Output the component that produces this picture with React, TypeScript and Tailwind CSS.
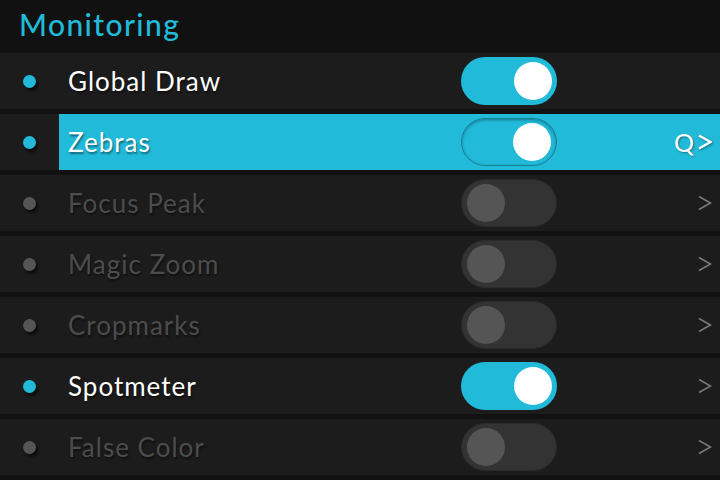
import React from 'react';

type Item = { label: string; enabled: boolean; on: boolean; selected?: boolean; chevron?: boolean };

const items: Item[] = [
    { label: 'Global Draw', enabled: true, on: true },
    { label: 'Zebras', enabled: true, on: true, selected: true, chevron: true },
    { label: 'Focus Peak', enabled: false, on: false, chevron: true },
    { label: 'Magic Zoom', enabled: false, on: false, chevron: true },
    { label: 'Cropmarks', enabled: false, on: false, chevron: true },
    { label: 'Spotmeter', enabled: true, on: true, chevron: true },
    { label: 'False Color', enabled: false, on: false, chevron: true },
];

const Toggle = ({ on, selected }: { on: boolean; selected?: boolean }) => {
    if (on) {
        return (
            <div className={`w-[96px] h-[48px] rounded-full flex items-center justify-end pr-[5px] bg-[#21bad9] ${selected ? 'border border-[#16809a] shadow-[inset_0_1px_3px_rgba(0,0,0,0.35)]' : ''}`}>
                <div className="w-[38px] h-[38px] rounded-full bg-white"></div>
            </div>
        );
    }
    return (
        <div className="w-[96px] h-[48px] rounded-full flex items-center pl-[5px] bg-[#333333] border border-[#2a2a2a]">
            <div className="w-[38px] h-[38px] rounded-full bg-[#555555]"></div>
        </div>
    );
};

const Chevron = ({ selected }: { selected?: boolean }) => (
    <svg width="14" height="16" viewBox="0 0 14 16" className={selected ? 'drop-shadow-[1px_1px_1px_rgba(0,0,0,0.4)]' : ''}>
        <polyline points="1,1.5 12.5,8 1,14.5" fill="none" stroke={selected ? '#ffffff' : '#7a7a7a'} strokeWidth={selected ? 2.4 : 1.6} />
    </svg>
);

export default function App() {
    return (
        <div className="w-[720px] h-[480px] bg-[#111111] overflow-hidden" style={{ fontFamily: 'Lato, "Open Sans", sans-serif' }}>
            <div className="h-[53px] pl-[19px] flex items-center">
                <h1 className="text-[#21bad9] text-[30px] font-medium tracking-[1.4px] leading-none pb-[6px]">Monitoring</h1>
            </div>
            <div className="flex flex-col gap-[5px]">
                {items.map(it => (
                    <div key={it.label} className="h-[56px] flex bg-[#1c1c1c]">
                        <div className="w-[59px] flex items-center justify-center pr-[1px]">
                            <div className={`w-[13px] h-[13px] rounded-full shadow-[2px_3px_3px_rgba(0,0,0,0.6)] ${it.enabled ? 'bg-[#21bad9]' : 'bg-[#555555]'}`}></div>
                        </div>
                        <div className={`flex-1 flex items-center pl-[9px] pr-[8px] ${it.selected ? 'bg-[#21bad9]' : ''}`}>
                            <span className={`w-[393px] text-[26px] tracking-[1px] [text-shadow:1px_2px_2px_rgba(0,0,0,0.45)] ${it.enabled ? 'text-white' : 'text-[#4c4c4c]'}`}>{it.label}</span>
                            <Toggle on={it.on} selected={it.selected} />
                            <div className="flex-1 flex items-center justify-end gap-[4px]">
                                {it.selected && <span className="text-white text-[25px] leading-none [text-shadow:1px_1px_2px_rgba(0,0,0,0.4)]">Q</span>}
                                {it.chevron && <Chevron selected={it.selected} />}
                            </div>
                        </div>
                    </div>
                ))}
            </div>
        </div>
    );
}
